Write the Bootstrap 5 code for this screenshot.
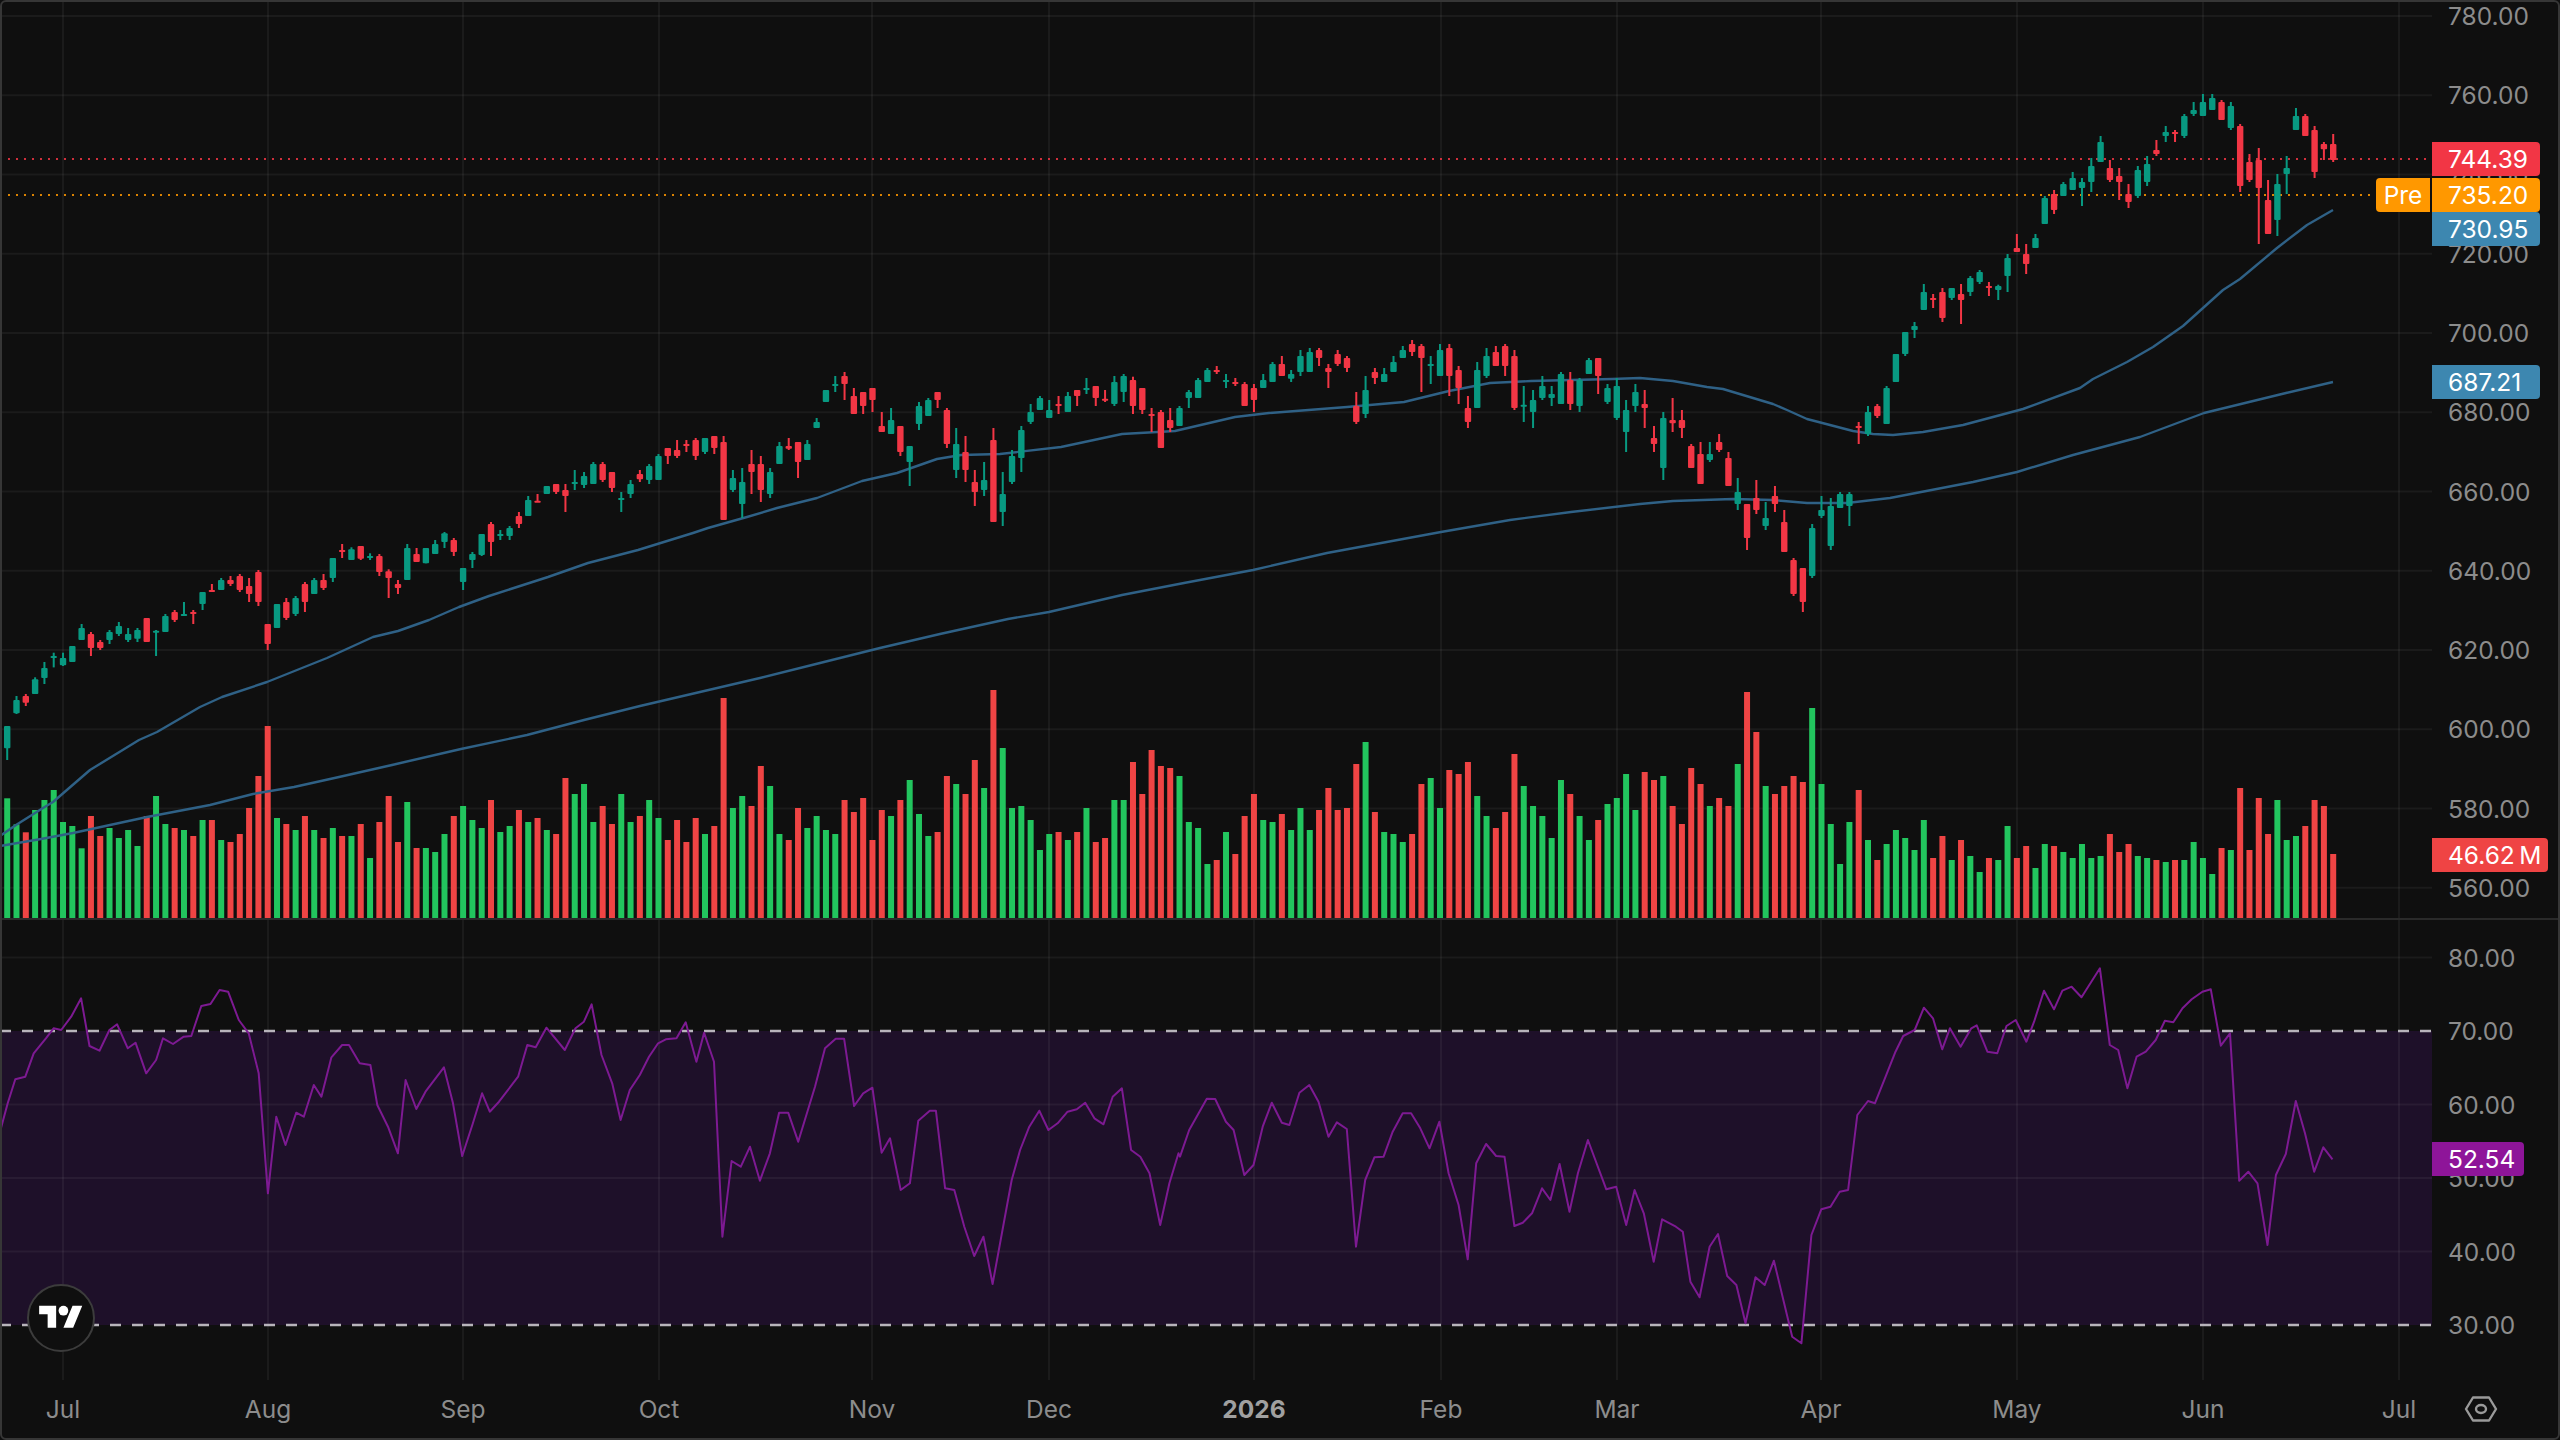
<!DOCTYPE html>
<html lang="en" data-bs-theme="dark">
<head>
<meta charset="utf-8">
<title>Chart</title>
<link href="https://cdn.jsdelivr.net/npm/bootstrap@5.3.0/dist/css/bootstrap.min.css" rel="stylesheet">
<style>
html,body{margin:0;background:#0f0f0f;}
.tv-frame{width:2560px;height:1440px;background:#0f0f0f;overflow:hidden;font-family:Inter,"Liberation Sans",sans-serif;font-size:24.5px;line-height:1;color:#8c8c8c;}
.tv-frame::after{content:"";position:absolute;inset:0;border:2px solid #363636;border-radius:6px;pointer-events:none;z-index:9;}
.tv-price-pane{height:920px;border-bottom:2px solid #2a2a2a;box-sizing:content-box;height:918px;}
.tv-rsi-pane{height:460px;}
.tv-time-row{height:58px;}
.tv-plot{width:2432px;flex:0 0 2432px;}
.tv-axis{width:128px;flex:0 0 128px;}
.tv-tick{position:absolute;left:16px;transform:translateY(-50%);white-space:nowrap;}
.tv-time{position:absolute;top:29px;transform:translate(-50%,-50%);white-space:nowrap;}
.tv-time.tv-year{font-weight:700;color:#a0a0a0;}
.tv-badge{position:absolute;height:34px;left:2432px;width:108px;padding-left:16px;color:#fff;z-index:3;border-radius:0 4px 4px 0;}
.tv-b-last{top:142px;background:#f23645;}
.tv-b-pre{top:178px;background:#ff9800;}
.tv-b-pre-tag{top:178px;left:2376px;width:54px;padding-left:0;background:#ff9800;border-radius:4px 0 0 4px;}
.tv-b-ma1{top:212px;background:#3d87b0;}
.tv-b-ma2{top:365px;background:#3d87b0;}
.tv-b-vol{top:838px;width:116px;background:#ef4444;}
.tv-b-rsi{top:222px;width:92px;background:#8e1599;}
.tv-logo{position:absolute;left:27px;top:1284px;width:68px;height:68px;border:2px solid #3c3c3c;border-radius:50%;background:#0f0f0f;z-index:4;}
.tv-corner{width:128px;flex:0 0 128px;}
.tv-timescale{width:2432px;flex:0 0 2432px;}
</style>
</head>
<body>
<div class="tv-frame position-relative d-flex flex-column">
  <div class="tv-price-pane d-flex position-relative">
    <svg id="plot" class="tv-plot" width="2432" height="918" viewBox="0 0 2432 918" xmlns="http://www.w3.org/2000/svg"></svg>
    <div id="priceAxis" class="tv-axis position-relative"></div>
    <div class="tv-badge tv-b-last d-flex align-items-center">744.39</div>
    <div class="tv-badge tv-b-pre-tag d-flex align-items-center justify-content-center">Pre</div>
    <div class="tv-badge tv-b-pre d-flex align-items-center">735.20</div>
    <div class="tv-badge tv-b-ma1 d-flex align-items-center">730.95</div>
    <div class="tv-badge tv-b-ma2 d-flex align-items-center">687.21</div>
    <div class="tv-badge tv-b-vol d-flex align-items-center">46.62&#8201;M</div>
  </div>
  <div class="tv-rsi-pane d-flex position-relative">
    <svg id="rsi" class="tv-plot" width="2432" height="460" viewBox="0 920 2432 460" xmlns="http://www.w3.org/2000/svg"></svg>
    <div id="rsiAxis" class="tv-axis position-relative"></div>
    <div class="tv-badge tv-b-rsi d-flex align-items-center">52.54</div>
  </div>
  <div class="tv-time-row d-flex">
    <div id="timeAxis" class="tv-timescale position-relative"></div>
    <div class="tv-corner d-flex align-items-center">
      <svg class="ms-3" style="margin-left:31px!important" width="36" height="30" viewBox="0 0 36 30" xmlns="http://www.w3.org/2000/svg" fill="none" stroke="#9a9a9a" stroke-width="2.4" stroke-linejoin="round"><path d="M3 15 10 3.5H26L33 15 26 26.5H10Z"/><ellipse cx="18" cy="15" rx="5" ry="4"/></svg>
    </div>
  </div>
  <div class="tv-logo d-flex align-items-center justify-content-center">
    <svg width="44" height="34" viewBox="0 0 36 28" xmlns="http://www.w3.org/2000/svg" fill="#fff"><path d="M14 22H7V11H0V4h14v18zM28 22h-8l7.5-18h8L28 22z"/><circle cx="20" cy="8" r="4"/></svg>
  </div>
</div>
<script src="https://cdn.jsdelivr.net/npm/bootstrap@5.3.0/dist/js/bootstrap.bundle.min.js"></script>
<script>
const GX=i=>7.2+9.304*i;
const COL={g:'#089981',r:'#f23645',vg:'#22c55e',vr:'#ef4444'};
const groups=[
[560,`g498,498,565,600 g408,420,460,462 r402,408,428,438 g352,358,402,402 g306,324,354,372 g278,288,292,322 g278,294,316,318 g258,258,306,306 g192,204,240,240 r216,222,264,288 r240,246,264,270 g210,216,240,252 g186,198,222,228 g204,222,240,246 g204,210,236,246 r174,174,246,246 g210,212,216,288 g162,168,216,216 r150,156,180,186 g126,162,166,168 r150,156,160,192 g96,96,132,150 r72,90,94,96 g54,60,90,90 r48,60,72,78 r42,48,90,96 r54,78,102,126 r30,36,126,138 r192,192,252,270`],
[360,`g732,732,804,804 r714,726,774,780 g708,714,762,768 r666,672,726,756 g654,660,702,702 r642,660,684,690 g594,594,654,666 r552,570,574,594 g562,568,600,600 r558,558,596,600 g580,588,594,600 r582,588,636,648 r628,634,654,714 r660,672,684,702 g552,564,660,660 r564,582,606,606 g564,564,610,610 g540,552,582,582 g516,520,546,564 r534,540,576,588 g624,624,666,690 g576,582,600,624 g522,522,585,588 r486,492,546,588 g510,522,528,540 g498,504,528,540 r456,468,492,504 g408,420,468,468 r402,422,426,426 g378,378,402,402 r372,372,396,402 r372,390,408,456 g330,366,372,390 g336,348,375,384 g306,312,372,372 r306,312,360,366 r336,336,384,396 g396,414,420,456 g360,372,402,414 r330,342,358,366 g312,318,360,372 g282,288,360,360 r264,264,288,312 r240,270,288,294 r240,252,258,276 r234,240,288,300 g234,234,276,282 r228,228,264,282 r228,246,480,480 g330,354,390,396 g324,366,432,474 r270,312,336,402 r288,312,390,426 g324,336,402,414 g246,258,312,312 r234,258,266,270 r246,246,306,354 g240,252,300,300 g174,186,204,204 g90,90,126,126 g48,72,76,96 r36,48,72,120 r84,108,162,162 r96,96,138,162 r84,84,120,156 r156,198,216,216 g144,180,222,222 r198,198,276,288 g258,258,306,378 g126,138,192,210 g114,120,168,168 r96,96,120,144 r144,150,252,264 g204,252,330,354 r228,276,330,366 r330,366,396,438 g306,360,390,408 r204,240,486,486`],
[320,`g456,522,576,618 g390,408,486,492 g318,330,414,456 g252,276,306,312 g228,234,270,270 g240,270,294,294 r228,252,258,282 g216,228,276,276 r210,210,228,258 g174,204,210,222 r198,198,234,258 r210,236,242,246 g168,186,252,258 g162,168,216,246 r170,180,258,282 r204,204,270,282 r264,282,286,336 r270,276,384,384 r264,300,324,336 g258,264,318,318 g210,216,234,264 g174,180,234,234 g144,150,186,186 r138,150,156,162 g162,180,186,204 r174,186,192,198 r186,192,258,258 r192,204,240,276 g162,180,204,204 g126,132,186,186 r108,132,168,168 g150,162,176,186 g90,108,156,168 g84,96,156,156 r84,90,114,138 r132,144,156,204 r90,102,132,138 r108,114,144,156 r216,258,306,312 g168,210,282,294 r144,156,174,192 g144,162,186,186 g108,126,156,156 g78,90,114,114 r60,72,96,108 r72,78,114,216 g108,132,138,192 g72,90,168,168 r72,84,168,228 r138,150,204,252 r228,264,306,324 g126,150,264,264 g84,108,168,174 r78,96,138,138 r72,78,138,168 r90,108,264,270 g198,254,258,306 g210,240,276,324 g168,198,234,240 g198,222,234,258 g156,162,252,252 r156,180,252,270 g174,180,258,276 g114,120,162,162 r114,114,168,222 g192,204,246,252 g174,198,294,300 g240,270,336,396 g192,216,258,276`],
[340,`r150,192,204,264 r258,294,312,336 g216,234,384,420 r174,240,250,276 r210,240,264,294 r312,318,384,384 r306,342,432,432 g306,342,360,366 r282,306,330,336 r336,354,438,438 g414,456,492,510 r492,492,594,630 r420,474,510,522 g486,534,558,570 r438,468,492,516 r510,546,636,636 r654,660,762,768 r684,684,786,816 g552,564,708,714 g468,510,528,534 g474,498,618,630 g456,462,504,504 g456,462,498,558 r246,258,262,312 g198,216,282,288 r192,198,228,234 g138,144,252,252`],
[80,`g822,822,906,906 g756,756,822,828 g726,738,750,774 g612,636,690,690 r642,654,660,684 r624,636,714,726 g624,624,654,660 r612,642,660,732 g588,594,636,648 g570,576,606,612 r606,618,624,648 g614,618,630,660 g522,534,588,636 r462,504,516,516 r492,522,552,582 g462,474,504,504 g348,354,432,432 r330,342,390,402 g306,312,348,348 g276,294,330,330 g294,306,324,378 g234,258,306,336 g168,186,246,246 r240,264,300,306 r264,288,306,360 r312,342,366,384 g258,270,348,354 g228,252,306,318 r180,210,222,228 g138,156,168,186 r150,156,160,186 g102,108,168,174 g66,90,102,108 g42,66,108,108 g42,54,90,90 r60,66,120,120 g66,78,144,150 r132,138,318,336 r222,246,300,306 r204,240,324,492 r300,360,462,462 g282,312,420,468 g228,264,282,342 g84,108,150,150 r102,108,168,168 r138,150,276,294 r186,192,208,240 r162,192,240,246`]
];
const candles=[];
groups.forEach(([off,s])=>s.trim().split(/\s+/).forEach(t=>{
  const c=t[0];const [h,a,b,l]=t.slice(1).split(',').map(v=>off+v/3);
  candles.push({c,h,a,b,l});
}));
const vol=[];
const v1=`g715 g793 r817 g750 g720 g690 g786 g798 g865 r768 r828 g804 g834 g810 g858 r768 g708 g792 r804 g810 r828 g780 r780 g840 r846 r822 r744 r648 r498 g774 r792 g810 r768 g810 r834 g804 r828 g828 r792 g894 r786 r708 r846 g726 r864 g864 g876 g822 r768 g738 g780 g804 r720 g816 g798 r750 g786 r774 g810 r822 r654 g702 g672 g786 r738 r792`;
const v2=`g342 g426 r408 g360 g414 r480 r420 r486 r414 g462 r438 r54 g384 g348 r378 r258 g318 g462 r480 r384 g444 g408 g450 g462 r360 r396 r354 r480 r390 g408 r360 g300 g402 g468 r456 r288 g312 r342 r240 g324 r30 g204 g384 g378 g420 g510 g462 r456 g480 r456 g384 r486 r474 g360 g360 r246 r342 r210 r258 r264 g288 g426 g444 g552 r540 g456 r522 r408 r342 g420 g426 r402 g450 g384 g450 r390 r324 r390 r384 r252 g186 r396 g456 g462 g486 r462 r312 g294 g384 r270 r282 r246 g348 g408 r444 r396 r222 g318 g378 g408 g474 g300 r342 g408 g480 r420 g372 g354 g282 g390 r276 r300 g288 r378 r432 r264 r312 g378 r354 r378 g252 r36 r156 g318 r342 r318 r288 r306 g84 g312 g432 g552 g426 r330 g480 r540 g492 g450 g474 g510 g420 r534 r468 g540 r480 g528 g576 r534 g540 g438 r534 r498 g564 g492 r498 g516 g534 g492 g534 g528 r462 r516 r492 g528 g534 r540 g546 r540 g540 g486 g534 g582 r504 g510 r324 r510 r354 r462 g360 g480 g468 r438 r360 r378 r522`;
v1.split(/\s+/).forEach(t=>vol.push({c:t[0],y:560+t.slice(1)/3}));
v2.split(/\s+/).forEach(t=>vol.push({c:t[0],y:680+t.slice(1)/3}));
const ma1=[[0,836],[16,825],[43,808],[53,802],[90,770],[139,740],[157,732],[200,707],[222,697],[267,682],[327,658],[373,637],[398,631],[429,620],[459,607],[489,596],[548,577],[588,563],[638,550],[693,533],[708,528],[747,517],[777,508],[817,498],[862,481],[897,473],[937,459],[961,455],[1000,454],[1061,447],[1122,434],[1175,431],[1235,417],[1269,413],[1347,407],[1404,402],[1449,391],[1490,383],[1531,381],[1612,379],[1640,378],[1673,381],[1707,387],[1723,389],[1773,404],[1787,410],[1807,419],[1853,431],[1873,434],[1893,435],[1923,432],[1963,425],[2023,409],[2080,388],[2093,379],[2127,362],[2153,347],[2183,326],[2223,290],[2240,279],[2277,248],[2307,225],[2333,210]];
const ma2=[[0,846],[41,839],[73,833],[147,817],[210,805],[253,794],[294,787],[339,777],[392,765],[461,749],[527,735],[584,720],[640,706],[1008,619],[1049,612],[1122,595],[1184,583],[1253,570],[1327,553],[1441,532],[1510,520],[1571,512],[1640,504],[1673,501],[1733,499],[1773,500],[1807,503],[1847,503],[1890,498],[1973,482],[2017,472],[2073,455],[2140,437],[2204,413],[2286,393],[2333,382]];
// between 640 and 1008 the slow average runs as a straight gentle rise
ma2.splice(13,0,[700,692],[760,678],[820,663],[880,648],[940,634]);
const rA=[[0,515],[10,430],[20,358],[33,350],[44,280],[60,235],[70,205],[80,210],[93,170],[106,115],[117,258],[130,272],[143,210],[153,193],[167,265],[177,248],[191,340],[204,300],[213,235],[226,252],[240,230],[250,228],[263,138],[275,132],[287,90],[298,95],[312,180],[325,220],[338,340],[350,700],[361,470],[373,555],[387,458],[397,470],[410,375],[420,410],[433,292],[447,255],[456,255],[470,310],[484,315],[493,435],[507,500],[520,580],[530,360],[544,447],[556,395],[580,322],[592,430],[604,588],[618,490],[630,400],[640,455],[652,425],[677,350],[689,255],[700,262],[714,203],[738,270],[752,205],[763,185],[773,133],[786,285],[800,370],[811,480],[823,390],[836,345],[848,290],[860,250],[870,238],[884,235],[896,187],[910,305],[920,218],[933,305],[944,830],[956,603],[968,620],[980,560],[993,662],[1006,580],[1018,458],[1030,458],[1043,545],[1065,380],[1078,265],[1092,236],[1103,236],[1116,438],[1128,400],[1140,383],[1152,578],[1163,535],[1177,690],[1189,670],[1200,482],[1215,452],[1223,452],[1235,685],[1247,690],[1260,800],[1273,888],[1285,830],[1297,972],[1310,810],[1322,660],[1333,570],[1345,500],[1358,452],[1370,510],[1382,490],[1395,455],[1407,448],[1418,428],[1430,475],[1442,493],[1454,410],[1466,385],[1478,570],[1490,590],[1502,640],[1516,795],[1528,670],[1540,580]];
const rB=[[0,590],[12,510],[35,416],[46,417],[60,485],[70,510],[84,645],[96,615],[108,500],[120,428],[133,488],[143,495],[156,398],[169,375],[181,425],[194,530],[205,487],[218,507],[230,860],[242,660],[254,592],[266,590],[278,515],[291,460],[302,460],[314,505],[326,565],[339,485],[351,640],[364,735],[376,898],[387,610],[400,552],[413,588],[424,590],[437,798],[448,788],[460,760],[473,685],[484,720],[496,612],[509,755],[520,640],[533,540],[557,688],[570,680],[583,795],[594,690],[606,760],[619,905],[630,778],[648,800],[657,815],[667,965],[679,1012],[692,860],[703,822],[715,948],[727,975],[739,1090],[752,952],[764,975],[776,902],[800,1130],[812,1150],[825,825],[838,748],[850,740],[862,695],[873,690],[885,465],[899,423],[908,430],[922,350],[935,275],[945,228],[960,210],[972,143],[984,175],[996,268],[1006,205],[1020,260],[1034,205],[1041,196],[1055,275],[1068,280],[1080,198],[1092,180],[1106,245],[1116,185],[1129,92],[1142,148],[1153,92],[1165,80],[1178,112],[1202,25],[1215,255],[1226,270],[1238,385],[1250,290],[1262,275],[1275,240],[1287,182],[1298,187],[1310,145],[1322,118],[1336,95],[1347,88],[1360,257],[1372,220],[1384,662],[1396,635],[1408,670],[1421,855],[1432,645],[1445,582],[1458,423],[1470,520],[1482,635],[1494,562],[1506,598]];
const rsiPts=rA.map(([x,v])=>[x/1.3067,960+v/3]).concat(rB.map(([x,v])=>[1180+x/1.3067,960+v/3]));
const pts=a=>a.map(p=>p[0].toFixed(1)+','+p[1].toFixed(1)).join(' ');

const vgrid=[63,268,463,659,872,1049,1254,1441,1617,1821,2017,2203,2399];
const gridStroke='rgba(242,242,242,.055)';
let s='';
const ticks=[];
for(let k=0;k<12;k++){const y=16+79.25*k;ticks.push([y,(780-20*k).toFixed(2)]);s+=`<line x1="0" x2="2432" y1="${y}" y2="${y}" stroke="${gridStroke}" stroke-width="2"/>`;}
vgrid.forEach(x=>s+=`<line x1="${x}" x2="${x}" y1="0" y2="920" stroke="${gridStroke}" stroke-width="2"/>`);
vol.forEach((v,i)=>{s+=`<rect x="${(GX(i)-3).toFixed(2)}" y="${v.y.toFixed(1)}" width="6" height="${(920-v.y).toFixed(1)}" fill="${v.c=='g'?COL.vg:COL.vr}"/>`;});
s+=`<polyline points="${pts(ma2)}" fill="none" stroke="#2f6186" stroke-width="2.4" stroke-linejoin="round"/>`;
s+=`<polyline points="${pts(ma1)}" fill="none" stroke="#2f6186" stroke-width="2.4" stroke-linejoin="round"/>`;
s+=`<line x1="0" x2="2432" y1="159" y2="159" stroke="#f23645" stroke-width="2" stroke-dasharray="2 6" opacity=".85"/>`;
s+=`<line x1="0" x2="2376" y1="195" y2="195" stroke="#ff9800" stroke-width="2" stroke-dasharray="2 6" opacity=".85"/>`;
candles.forEach((c,i)=>{const x=GX(i),f=COL[c.c];
  s+=`<rect x="${(x-1).toFixed(2)}" y="${c.h.toFixed(1)}" width="2" height="${(c.l-c.h).toFixed(1)}" fill="${f}"/>`;
  s+=`<rect x="${(x-3.2).toFixed(2)}" y="${c.a.toFixed(1)}" width="6.4" height="${Math.max(c.b-c.a,2).toFixed(1)}" rx="1" fill="${f}"/>`;
});
document.getElementById('plot').innerHTML=s;

const RY=v=>1031+(70-v)*7.35;
let r=`<rect x="0" y="${RY(70)}" width="2432" height="${RY(30)-RY(70)}" fill="#1e1029"/>`;
[80,60,50,40].forEach(v=>r+=`<line x1="0" x2="2432" y1="${RY(v)}" y2="${RY(v)}" stroke="${gridStroke}" stroke-width="2"/>`);
vgrid.forEach(x=>r+=`<line x1="${x}" x2="${x}" y1="920" y2="1382" stroke="${gridStroke}" stroke-width="2"/>`);
[70,30].forEach(v=>r+=`<line x1="0" x2="2432" y1="${RY(v)}" y2="${RY(v)}" stroke="#b8b4bb" stroke-width="2.4" stroke-dasharray="11 11"/>`);
r+=`<polyline points="${pts(rsiPts)}" fill="none" stroke="#7d1a92" stroke-width="2" stroke-linejoin="round"/>`;
document.getElementById('rsi').innerHTML=r;

const addTick=(host,y,t)=>{const d=document.createElement('div');d.className='tv-tick';d.style.top=y+'px';d.textContent=t;host.appendChild(d);};
const pa=document.getElementById('priceAxis');ticks.forEach(([y,t])=>addTick(pa,y,t));
const ra=document.getElementById('rsiAxis');[80,70,60,50,40,30].forEach(v=>addTick(ra,RY(v)-920,v.toFixed(2)));
const ta=document.getElementById('timeAxis');
['Jul','Aug','Sep','Oct','Nov','Dec','2026','Feb','Mar','Apr','May','Jun','Jul'].forEach((t,i)=>{
  const d=document.createElement('div');d.className='tv-time'+(t==='2026'?' tv-year':'');d.style.left=vgrid[i]+'px';d.textContent=t;ta.appendChild(d);
});
</script>
</body>
</html>
